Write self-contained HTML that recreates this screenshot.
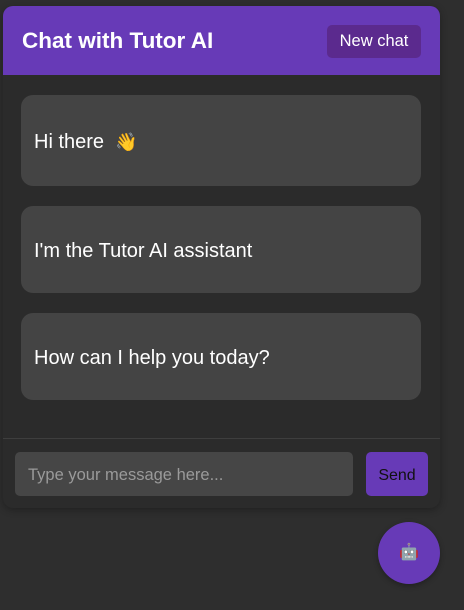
<!DOCTYPE html>
<html><head><style>
body{margin:0;width:464px;height:610px;background:#2e2e2e;font-family:"Liberation Sans",sans-serif;position:relative;overflow:hidden}
.card{position:absolute;left:3px;top:6px;width:437px;height:502px;background:#2b2b2b;border-radius:10px;overflow:hidden;box-shadow:0 2px 8px rgba(0,0,0,.3)}
.hdr{height:69px;background:#673ab7;position:relative}
.hdr h1{margin:0;position:absolute;left:19px;top:22px;font-size:22.5px;color:#fff;font-weight:bold}
.nc{position:absolute;left:324px;top:19px;width:94px;height:33px;background:#5b2a8e;border-radius:5px;color:#fff;font-size:16.5px;line-height:33px;text-align:center}
.b{position:absolute;left:18px;width:400px;background:#444;border-radius:12px;color:#fff;font-size:20px;box-sizing:border-box;padding-left:13px;padding-top:4px;display:flex;align-items:center}
.div{position:absolute;left:0;top:432px;width:437px;height:1px;background:#3e3e3e}
.in{position:absolute;left:12px;top:446px;width:338px;height:44px;background:#464646;border-radius:5px;color:#9a9a9a;font-size:16.5px;line-height:47px;padding-left:13px;box-sizing:border-box}
.snd{position:absolute;left:363px;top:446px;width:62px;height:44px;background:#673ab7;border-radius:5px;color:#111;font-size:16px;line-height:47px;text-align:center}
.fab{position:absolute;left:378px;top:522px;width:62px;height:62px;border-radius:50%;background:#673ab7;box-shadow:0 2px 6px rgba(0,0,0,.3);text-align:center;line-height:62px;font-size:16px}
</style></head><body>
<div class="card">
<div class="hdr"><h1>Chat with Tutor AI</h1><div class="nc">New chat</div></div>
<div class="b" style="top:89px;height:91px">Hi there&nbsp;&nbsp;<span style="font-size:18px">👋</span></div>
<div class="b" style="top:200px;height:87px">I'm the Tutor AI assistant</div>
<div class="b" style="top:307px;height:87px">How can I help you today?</div>
<div class="div"></div>
<div class="in">Type your message here...</div>
<div class="snd">Send</div>
</div>
<div class="fab">🤖</div>
</body></html>
